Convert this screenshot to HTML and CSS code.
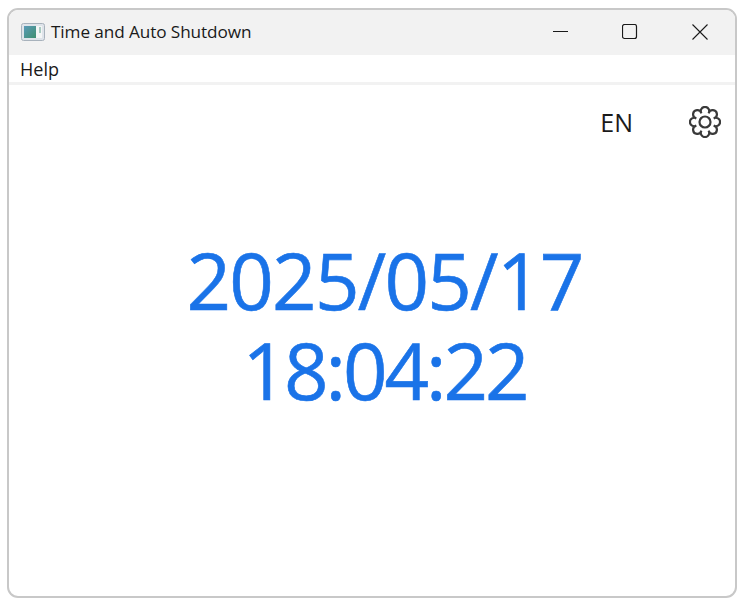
FILE: index.html
```html
<!DOCTYPE html>
<html lang="en">
<head>
  <meta charset="UTF-8">
  <title>Time and Auto Shutdown</title>
  <link rel="stylesheet" href="styles.css">
</head>
<body>
  <div class="window">
    <div class="titlebar">
      <svg class="app-icon" width="24" height="18" viewBox="0 0 24 18">
        <defs>
          <linearGradient id="pane" x1="0" y1="0" x2="1" y2="1">
            <stop offset="0" stop-color="#5a9ab8"/>
            <stop offset="1" stop-color="#3f9070"/>
          </linearGradient>
        </defs>
        <rect x="0.5" y="0.5" width="23" height="17" rx="2" fill="#dfe4ea" stroke="#a8b2bc"/>
        <rect x="3" y="3" width="12" height="12" fill="url(#pane)"/>
        <rect x="15" y="3" width="6" height="12" fill="#f4f6f6"/>
        <rect x="18" y="4" width="2" height="6" fill="#a9cbc2"/>
      </svg>
      <span class="title">Time and Auto Shutdown</span>
      <div class="controls">
        <button class="ctl">
          <svg width="16" height="16" viewBox="0 0 16 16"><path d="M1 7.5h15" stroke="#1a1a1a" fill="none"/></svg>
        </button>
        <button class="ctl">
          <svg width="16" height="16" viewBox="0 0 16 16"><rect x="0.5" y="0.5" width="14" height="14" rx="2" stroke="#1a1a1a" fill="none" stroke-width="1.2"/></svg>
        </button>
        <button class="ctl">
          <svg width="16" height="16" viewBox="0 0 16 16"><path d="M.5.5l15 15M15.5.5l-15 15" stroke="#1a1a1a" fill="none" stroke-width="1.1"/></svg>
        </button>
      </div>
    </div>
    <div class="menubar"><span class="menu-item">Help</span></div>
    <div class="content">
      <div class="tools">
        <span class="lang">EN</span>
        <svg class="gear" width="32" height="32" viewBox="0 0 32 32" fill="none" stroke="#3a3a3a" stroke-width="2.2">
          <circle cx="16" cy="16" r="5.5"/>
          <path d="M24.78 12.36A4.2 4.2 0 1 1 24.78 19.64A4.2 4.2 0 1 1 19.64 24.78A4.2 4.2 0 1 1 12.36 24.78A4.2 4.2 0 1 1 7.22 19.64A4.2 4.2 0 1 1 7.22 12.36A4.2 4.2 0 1 1 12.36 7.22A4.2 4.2 0 1 1 19.64 7.22A4.2 4.2 0 1 1 24.78 12.36z"/>
        </svg>
      </div>
      <div class="clock">
        <div class="date">2025/05/17</div>
        <div class="time">18:04:22</div>
      </div>
    </div>
  </div>
</body>
</html>
```

FILE: styles.css
```css
html, body {
  margin: 0;
  height: 100%;
  background: #fff;
}
body {
  padding: 8px 5px 6px 7px;
  box-sizing: border-box;
  font-family: "Open Sans", "Noto Sans", sans-serif;
  color: #1a1a1a;
}
.window {
  height: 100%;
  box-sizing: border-box;
  border: 2px solid #c8c8c8;
  border-radius: 11px;
  overflow: hidden;
  display: flex;
  flex-direction: column;
  background: #fff;
}
.titlebar {
  height: 45px;
  background: #f2f2f2;
  display: flex;
  align-items: center;
  padding-left: 12px;
  padding-bottom: 2px;
  box-sizing: border-box;
  flex-shrink: 0;
}
.app-icon {
  margin-right: 6px;
}
.title {
  font-size: 17.2px;
  letter-spacing: -0.1px;
}
.controls {
  margin-left: auto;
  display: flex;
}
.ctl {
  width: 70px;
  height: 43px;
  border: none;
  background: none;
  padding: 0;
  display: flex;
  align-items: center;
  justify-content: center;
}
.menubar {
  height: 30px;
  box-sizing: border-box;
  border-bottom: 3px solid #f2f2f2;
  display: flex;
  align-items: center;
  padding-left: 11px;
  flex-shrink: 0;
}
.menu-item {
  font-size: 18px;
}
.content {
  flex: 1;
  display: flex;
  flex-direction: column;
}
.tools {
  display: flex;
  justify-content: flex-end;
  align-items: center;
  gap: 57px;
  padding: 21px 14px 0 0;
}
.lang {
  font-size: 25px;
  line-height: 32px;
  margin-right: -1px;
}
.clock {
  margin-top: 97px;
  padding-left: 25px;
  text-align: center;
  font-size: 78px;
  line-height: 90px;
  color: #1a73e8;
  -webkit-text-stroke: 0.6px #1a73e8;
}
.date {
  letter-spacing: -1.8px;
}
.time {
  letter-spacing: -3.1px;
}
```
